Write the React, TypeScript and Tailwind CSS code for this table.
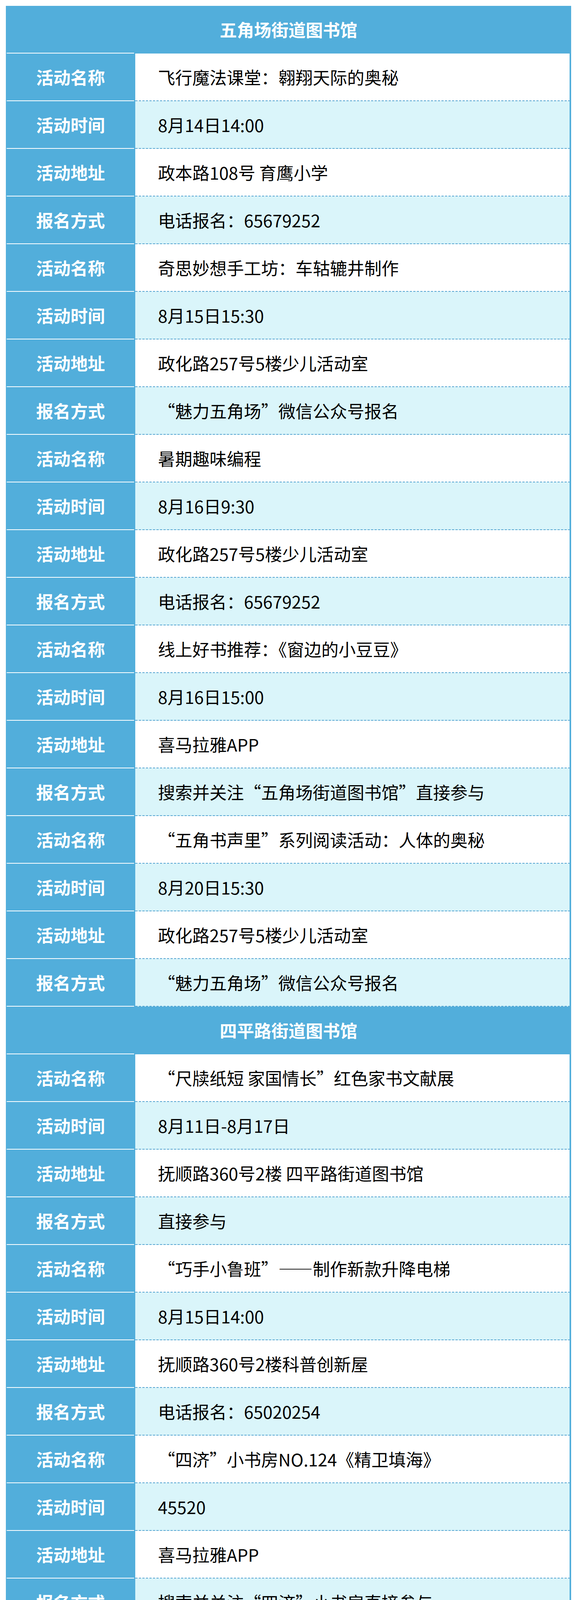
import React from "react";

type Item = { name: string; time: string; place: string; signup: string };
type Section = { title: string; items: Item[] };

const sections: Section[] = [
  {
    title: "五角场街道图书馆",
    items: [
      { name: "飞行魔法课堂：翱翔天际的奥秘", time: "8月14日14:00", place: "政本路108号 育鹰小学", signup: "电话报名：65679252" },
      { name: "奇思妙想手工坊：车轱辘井制作", time: "8月15日15:30", place: "政化路257号5楼少儿活动室", signup: "“魅力五角场”微信公众号报名" },
      { name: "暑期趣味编程", time: "8月16日9:30", place: "政化路257号5楼少儿活动室", signup: "电话报名：65679252" },
      { name: "线上好书推荐：《窗边的小豆豆》", time: "8月16日15:00", place: "喜马拉雅APP", signup: "搜索并关注“五角场街道图书馆”直接参与" },
      { name: "“五角书声里”系列阅读活动：人体的奥秘", time: "8月20日15:30", place: "政化路257号5楼少儿活动室", signup: "“魅力五角场”微信公众号报名" },
    ],
  },
  {
    title: "四平路街道图书馆",
    items: [
      { name: "“尺牍纸短 家国情长”红色家书文献展", time: "8月11日-8月17日", place: "抚顺路360号2楼 四平路街道图书馆", signup: "直接参与" },
      { name: "“巧手小鲁班”——制作新款升降电梯", time: "8月15日14:00", place: "抚顺路360号2楼科普创新屋", signup: "电话报名：65020254" },
      { name: "“四济”小书房NO.124《精卫填海》", time: "45520", place: "喜马拉雅APP", signup: "搜索并关注“四济”小书房直接参与" },
    ],
  },
];

const font = "font-['Microsoft_YaHei','Noto_Sans_CJK_SC',sans-serif]";

const HeaderRow: React.FC<{ title: string }> = ({ title }) => (
  <div className="flex flex-col bg-[#52aedb]">
    <div className="h-[120px] flex items-center justify-center">
      <span className="text-[44px] font-bold text-white leading-none">{title}</span>
    </div>
    <div className="flex h-[2px]">
      <div className="w-[331px] pl-[2px] pr-[3px]">
        <div className="h-[2px] bg-white" />
      </div>
    </div>
  </div>
);

const DataRow: React.FC<{ label: string; value: string; shaded: boolean }> = ({ label, value, shaded }) => (
  <div className="flex">
    <div className="w-[331px] shrink-0 flex flex-col bg-[#52aedb]">
      <div className="h-[120px] flex items-center justify-center">
        <span className="text-[44px] font-bold text-white leading-none">{label}</span>
      </div>
      <div className="pl-[2px] pr-[3px]">
        <div className="h-[2px] bg-white" />
      </div>
    </div>
    <div className={`flex-1 flex flex-col border-r-4 border-[#52aedb] ${shaded ? "bg-[#daf5fa]" : "bg-white"}`}>
      <div className="h-[120px] flex items-center pl-[58px]">
        <span className="text-[44px] text-black leading-none whitespace-nowrap">{value}</span>
      </div>
      <div className="h-[2px] bg-[repeating-linear-gradient(90deg,#5aa8d3_0px,#5aa8d3_6px,transparent_6px,transparent_9px)]" />
    </div>
  </div>
);

export default function App() {
  return (
    <div lang="zh-CN" className={`min-h-[4180px] bg-white pt-[15px] pl-[15px] pr-[15px] ${font}`}>
      <div className="w-[1446px] flex flex-col">
        {sections.map((s) => (
          <React.Fragment key={s.title}>
            <HeaderRow title={s.title} />
            {s.items.map((it, i) => (
              <React.Fragment key={i}>
                <DataRow label="活动名称" value={it.name} shaded={false} />
                <DataRow label="活动时间" value={it.time} shaded={true} />
                <DataRow label="活动地址" value={it.place} shaded={false} />
                <DataRow label="报名方式" value={it.signup} shaded={true} />
              </React.Fragment>
            ))}
          </React.Fragment>
        ))}
      </div>
    </div>
  );
}
